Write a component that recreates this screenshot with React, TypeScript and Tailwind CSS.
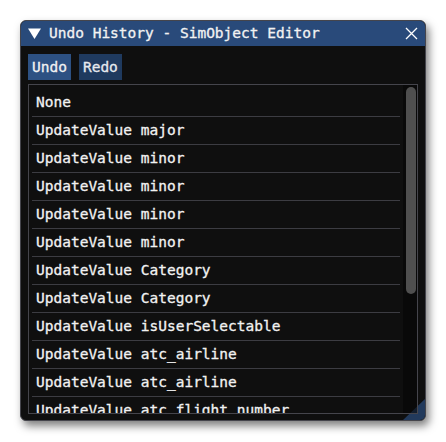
import React from "react";

const rows: string[] = [
  "None",
  "UpdateValue major",
  "UpdateValue minor",
  "UpdateValue minor",
  "UpdateValue minor",
  "UpdateValue minor",
  "UpdateValue Category",
  "UpdateValue Category",
  "UpdateValue isUserSelectable",
  "UpdateValue atc_airline",
  "UpdateValue atc_airline",
  "UpdateValue atc_flight_number",
];

const mono = { fontFamily: '"DejaVu Sans Mono", "Liberation Mono", monospace' };

export default function App() {
  return (
    <div className="w-[446px] h-[442px] bg-white pt-[20px] pl-[20px]" style={mono}>
      <div className="relative w-[406px] h-[401px] rounded-[6px] bg-[#0f0f0f] border border-[#45454c] shadow-[3px_5px_8px_rgba(0,0,0,0.5)] overflow-hidden flex flex-col text-[14.5px] leading-none text-[#f2f2f2] [-webkit-text-stroke:0.3px_currentColor]">
        {/* resize grip in the bottom-right corner */}
        <svg className="absolute right-0 bottom-0 z-0" width="22" height="21" viewBox="0 0 22 21">
          <polygon points="22,0 22,21 0,21" fill="#223a5c" />
        </svg>

        {/* title bar */}
        <div className="relative z-10 h-[25px] bg-[#294a7a] flex items-center pl-[7px] pr-[7px]">
          <svg width="13" height="11" viewBox="0 0 13 11" className="shrink-0">
            <polygon points="0,0.5 13,0.5 6.5,11" fill="#ffffff" />
          </svg>
          <span className="ml-[8px] whitespace-pre">Undo History - SimObject Editor</span>
          <div className="flex-1" />
          <svg width="13" height="13" viewBox="0 0 13 13" className="shrink-0 mb-[1px]">
            <path d="M1 1 L12 12 M12 1 L1 12" stroke="#ffffff" strokeWidth="1.3" fill="none" />
          </svg>
        </div>

        {/* body */}
        <div className="relative z-10 flex flex-col px-[7px] pt-[8px]">
          <div className="flex gap-[8px] h-[26px]">
            <div className="h-full px-[4px] flex items-center bg-[#2d5183]">Undo</div>
            <div className="h-full px-[4px] flex items-center bg-[#1f3a5f] text-[#e6e9ee]">Redo</div>
          </div>

          <div className="mt-[4px] h-[330px] border border-[#45454c] flex overflow-hidden">
            <div className="flex-1 pt-[4px] px-[3px] overflow-hidden">
              {rows.map((r, i) => (
                <div
                  key={i}
                  className="h-[28px] shrink-0 border-b border-[#3c3c42] flex items-center pl-[4px] whitespace-pre"
                >
                  {r}
                </div>
              ))}
            </div>
            <div className="w-[14px] shrink-0 bg-[rgba(5,5,5,0.55)] pt-[2px] pl-[3px]">
              <div className="w-[10px] h-[207px] rounded-full bg-[#4f4f4f]" />
            </div>
          </div>
        </div>
      </div>
    </div>
  );
}
